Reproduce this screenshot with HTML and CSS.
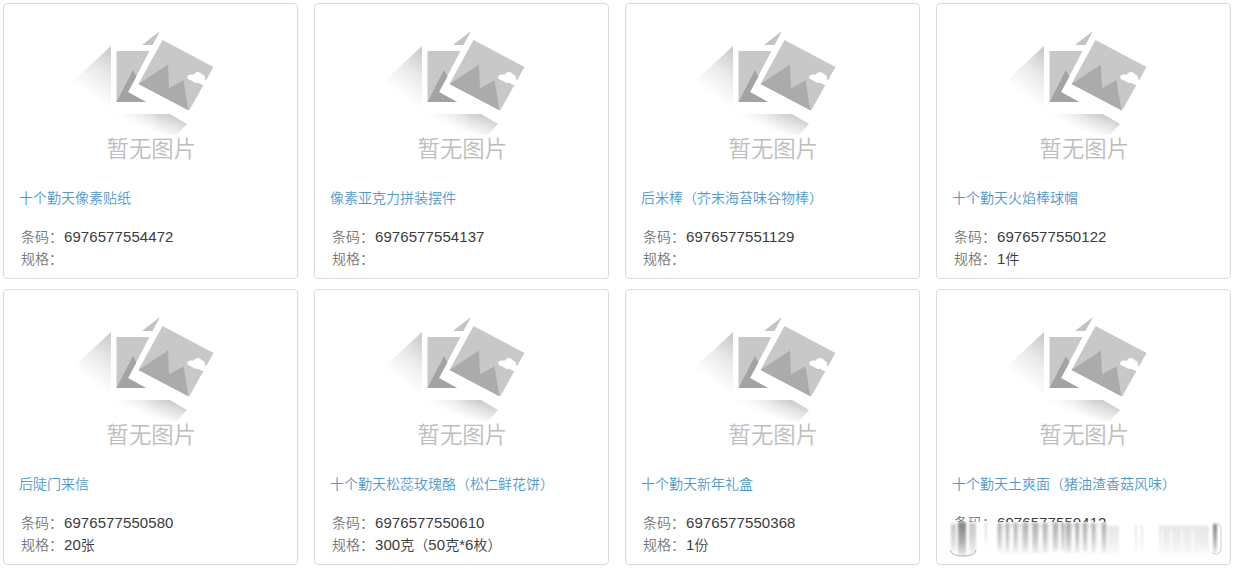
FILE: index.html
```
<!DOCTYPE html>
<html lang="zh-CN">
<head>
  <meta charset="UTF-8">
  <title>商品列表</title>
  <link rel="stylesheet" href="styles.css">
</head>
<body>

<!-- shared "no picture" placeholder -->
<svg class="defs" width="0" height="0">
  <defs>
    <linearGradient id="shadeLeft" gradientUnits="userSpaceOnUse" x1="116" y1="52" x2="86" y2="92">
      <stop offset="0" stop-color="#c9c9c9"/>
      <stop offset="0.5" stop-color="#eaeaea"/>
      <stop offset="1" stop-color="#fff"/>
    </linearGradient>
    <linearGradient id="shadeBottom" gradientUnits="userSpaceOnUse" x1="168" y1="111" x2="160" y2="134">
      <stop offset="0" stop-color="#c4c4c4"/>
      <stop offset="0.45" stop-color="#e2e2e2"/>
      <stop offset="1" stop-color="#fff"/>
    </linearGradient>
    <linearGradient id="fadeBottom" gradientUnits="userSpaceOnUse" x1="108" y1="0" x2="158" y2="0">
      <stop offset="0" stop-color="#fff"/>
      <stop offset="1" stop-color="#fff" stop-opacity="0"/>
    </linearGradient>
    <symbol id="nopic" viewBox="60 20 170 150">
      <path d="M111 46 L70 84 L84 120 L111 113Z" fill="url(#shadeLeft)"/>
      <path d="M111 114 H170 L187 124 L177 135 H111Z" fill="url(#shadeBottom)"/>
      <path d="M108 114 H158 V136 H108Z" fill="url(#fadeBottom)"/>
      <path d="M160 31 L142 45 H152.500Z" fill="#c3c3c3"/>
      <path d="M116.500 51 H149.500 L128 92 L146 102 H116.500Z" fill="#c8c8c8"/>
      <path d="M116.500 102 L133 70 L136.400 76.500 L128 92 L146 102Z" fill="#a3a3a3"/>
      <path d="M162.500 40 L213.500 67 L189.200 110.500 L138.500 84Z" fill="#c8c8c8"/>
      <path d="M138.500 84 L168 64.500 L169 88.300 L183.500 80.300 L188.300 110.200Z" fill="#ababab"/>
      <path d="M204.500 85 C201 85.500 200 82.800 197 82.800 C194 83.500 192.500 80.500 190 80 C186.500 79.500 186.300 75.500 189.500 74.800 C191.500 74 192.500 75 194 74.500 C195 71.200 200.500 71 202 74.500 C205 75 206 78.500 204.500 80.500 L208 79Z" fill="#fff"/>
      <text x="106.500" y="157" class="nopic-text">暂无图片</text>
    </symbol>
    <filter id="smudge" x="-5%" y="-20%" width="110%" height="140%">
      <feGaussianBlur stdDeviation="1.1 1.4"/>
    </filter>
    <linearGradient id="bar" x1="0" y1="0" x2="0" y2="1">
      <stop offset="0" stop-color="#808080"/>
      <stop offset="0.6" stop-color="#b0b0b0"/>
      <stop offset="1" stop-color="#e4e4e4"/>
    </linearGradient>
  </defs>
</svg>

<div class="list">
  <div class="card">
    <svg class="pic"><use href="#nopic"/></svg>
    <a class="title">十个勤天像素贴纸</a>
    <p><label>条码：</label><span class="num">6976577554472</span></p>
    <p><label>规格：</label></p>
  </div>
  <div class="card">
    <svg class="pic"><use href="#nopic"/></svg>
    <a class="title">像素亚克力拼装摆件</a>
    <p><label>条码：</label><span class="num">6976577554137</span></p>
    <p><label>规格：</label></p>
  </div>
  <div class="card">
    <svg class="pic"><use href="#nopic"/></svg>
    <a class="title">后米棒（芥末海苔味谷物棒）</a>
    <p><label>条码：</label><span class="num">6976577551129</span></p>
    <p><label>规格：</label></p>
  </div>
  <div class="card">
    <svg class="pic"><use href="#nopic"/></svg>
    <a class="title">十个勤天火焰棒球帽</a>
    <p><label>条码：</label><span class="num">6976577550122</span></p>
    <p><label>规格：</label><span class="num">1</span>件</p>
  </div>
  <div class="card">
    <svg class="pic"><use href="#nopic"/></svg>
    <a class="title">后陡门来信</a>
    <p><label>条码：</label><span class="num">6976577550580</span></p>
    <p><label>规格：</label><span class="num">20</span>张</p>
  </div>
  <div class="card">
    <svg class="pic"><use href="#nopic"/></svg>
    <a class="title">十个勤天松蕊玫瑰酪（松仁鲜花饼）</a>
    <p><label>条码：</label><span class="num">6976577550610</span></p>
    <p><label>规格：</label><span class="num">300</span>克（<span class="num">50</span>克<span class="num">*6</span>枚）</p>
  </div>
  <div class="card">
    <svg class="pic"><use href="#nopic"/></svg>
    <a class="title">十个勤天新年礼盒</a>
    <p><label>条码：</label><span class="num">6976577550368</span></p>
    <p><label>规格：</label><span class="num">1</span>份</p>
  </div>
  <div class="card">
    <svg class="pic"><use href="#nopic"/></svg>
    <a class="title">十个勤天土爽面（猪油渣香菇风味）</a>
    <p><label>条码：</label><span class="num">6976577550412</span></p>
    <!-- smeared strip over the lower rows -->
    <svg class="smear" viewBox="944 522 284 40">
      <path d="M944 522 H1228 V562 H944Z" fill="#fff"/>
      <g filter="url(#smudge)" fill="url(#bar)">
        <path d="M951 524h5v27h-5zM969 523h7v31h-7z" opacity=".45"/>
        <path d="M958 522h8v33h-8z"/>
        <path d="M985 523h2v23h-2z" opacity=".3"/>
        <path d="M997 524h110v28h-110z" opacity=".28"/>
        <path d="M998 522h3v28h-3zM1006 522h3v31h-3zM1014 522h3v30h-3zM1023 522h5v30h-5z" opacity=".5"/>
        <path d="M1032 522h6v31h-6zM1043 522h4v31h-4zM1053 522h5v28h-5z" opacity=".5"/>
        <path d="M1061 522h3v28h-3zM1066 522h5v31h-5zM1075 522h4v31h-4z" opacity=".55"/>
        <path d="M1083 522h4v29h-4zM1092 522h3v31h-3zM1102 522h4v31h-4z" opacity=".5"/>
        <path d="M1108 526h11v27h-11zM1135 526h2v27h-2zM1141 526h2v27h-2z" opacity=".2"/>
        <path d="M1159 526h50v26h-50zM1165 528h3v26h-3zM1175 528h3v26h-3zM1186 528h3v26h-3zM1197 528h3v26h-3z" opacity=".2"/>
        <path d="M1213 524h4v28h-4z"/>
      </g>
      <g fill="none" stroke="#ccc" stroke-width="1">
        <path d="M950 550 Q952 556 963 556 Q975 556 976 550" stroke="#b0b0b0"/>
        <path d="M1212 552 Q1213 554 1217 554 Q1221 553 1221 548 V527 Q1220 524 1217 524"/>
      </g>
      <g filter="url(#smudge)" fill="#fff" opacity=".85">
        <path d="M1003 527h2v23h-2zM1010 527h3v22h-3zM1019 527h2v23h-2zM1029 525h3v28h-3zM1039 527h3v23h-3zM1049 525h3v28h-3zM1059 525h2v26h-2zM1072 527h3v23h-3zM1080 525h2v28h-2zM1088 527h3v23h-3zM1097 525h4v28h-4z"/>
        <path d="M1161 530h2v22h-2zM1170 530h2v22h-2zM1181 530h2v22h-2zM1192 530h2v22h-2z"/>
      </g>
    </svg>
  </div>
</div>

</body>
</html>
```
FILE: styles.css
```
body {
  margin: 0;
  background: #fff;
  font-family: "Noto Sans CJK SC", sans-serif;
  font-size: 14px;
  font-weight: 350;
  color: #3c3c3c;
  overflow: hidden;
}

.defs {
  position: absolute;
}

.list {
  display: grid;
  grid-template-columns: repeat(4, 295px);
  grid-auto-rows: 276px;
  gap: 10px 16px;
  padding: 3px;
}

.card {
  position: relative;
  box-sizing: border-box;
  border: 1px solid #dcdcdc;
  border-radius: 4px;
}

.pic {
  display: block;
  width: 170px;
  height: 150px;
  margin: 16px 0 0 56px;
}

.nopic-text {
  font-size: 22.4px;
  font-weight: 350;
  fill: #bdbdbd;
}

.title {
  display: block;
  margin: 16px 0 17px 15px;
  line-height: 22px;
  color: #4f9bcf;
  white-space: nowrap;
}

p {
  display: flex;
  align-items: center;
  height: 22px;
  margin: 0 0 0 17px;
  line-height: 22px;
  white-space: nowrap;
}

label {
  width: 43px;
  color: #777;
}

.num {
  font-family: "Liberation Sans", Arial, sans-serif;
  font-size: 15px;
  line-height: 24px;
  letter-spacing: 0.08px;
  padding-top: 2px;
}

.smear {
  position: absolute;
  left: 7px;
  top: 232px;
  width: 284px;
  height: 40px;
}
```
